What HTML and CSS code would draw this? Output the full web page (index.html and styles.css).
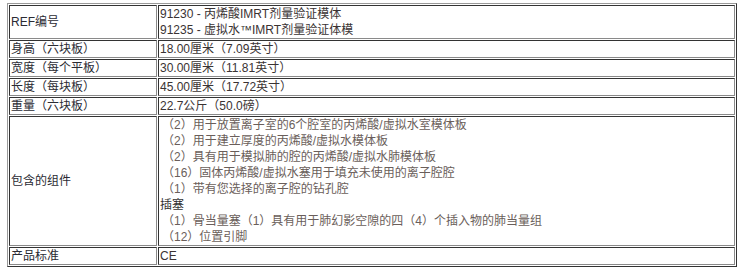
FILE: index.html
```html
<!DOCTYPE html>
<html lang="zh-CN">
<head>
<meta charset="utf-8">
<title>规格</title>
<link rel="stylesheet" href="styles.css">
</head>
<body>
<table class="spec">
  <tbody>
    <tr>
      <td class="label">REF编号</td>
      <td class="value">91230 - 丙烯酸IMRT剂量验证模体<br>91235 - 虚拟水™IMRT剂量验证体模</td>
    </tr>
    <tr>
      <td class="label">身高（六块板）</td>
      <td class="value">18.00厘米（7.09英寸）</td>
    </tr>
    <tr>
      <td class="label">宽度（每个平板）</td>
      <td class="value">30.00厘米（11.81英寸）</td>
    </tr>
    <tr>
      <td class="label">长度（每块板）</td>
      <td class="value">45.00厘米（17.72英寸）</td>
    </tr>
    <tr>
      <td class="label">重量（六块板）</td>
      <td class="value">22.7公斤（50.0磅）</td>
    </tr>
    <tr>
      <td class="label">包含的组件</td>
      <td class="value">
        <ul class="items">
          <li>（2）用于放置离子室的6个腔室的丙烯酸/虚拟水室模体板</li>
          <li>（2）用于建立厚度的丙烯酸/虚拟水模体板</li>
          <li>（2）具有用于模拟肺的腔的丙烯酸/虚拟水肺模体板</li>
          <li>（16）固体丙烯酸/虚拟水塞用于填充未使用的离子腔腔</li>
          <li>（1）带有您选择的离子腔的钻孔腔</li>
        </ul>
        <div class="sub">插塞</div>
        <ul class="items">
          <li>（1）骨当量塞（1）具有用于肺幻影空隙的四（4）个插入物的肺当量组</li>
          <li>（12）位置引脚</li>
        </ul>
      </td>
    </tr>
    <tr>
      <td class="label">产品标准</td>
      <td class="value">CE</td>
    </tr>
  </tbody>
</table>
</body>
</html>
```

FILE: styles.css
```css
html, body {
  margin: 0;
  padding: 0;
  background: #ffffff;
}

body {
  padding: 3px 0 0 7px;
  font-family: "Liberation Sans", "Noto Sans CJK SC", sans-serif;
  font-size: 12px;
  line-height: 16px;
  color: #333333;
}

.spec {
  width: 730px;
  border-collapse: separate;
  border-spacing: 1px;
  border-width: 1px;
  border-style: solid;
  border-color: #9a9a9a #333333 #333333 #9a9a9a;
}

.spec td {
  border-width: 1px;
  border-style: solid;
  border-color: #333333 #8a8a8a #8a8a8a #333333;
  padding: 0 0 0 1px;
  vertical-align: middle;
}

.label {
  width: 145px;
  color: #2b2b33;
}

.value {
  color: #3a3333;
}

.items {
  list-style: none;
  margin: 0;
  padding: 0 0 0 2px;
  color: #6a5e5a;
}

.items li {
  margin: 0;
}

.sub {
  color: #333333;
}
```
